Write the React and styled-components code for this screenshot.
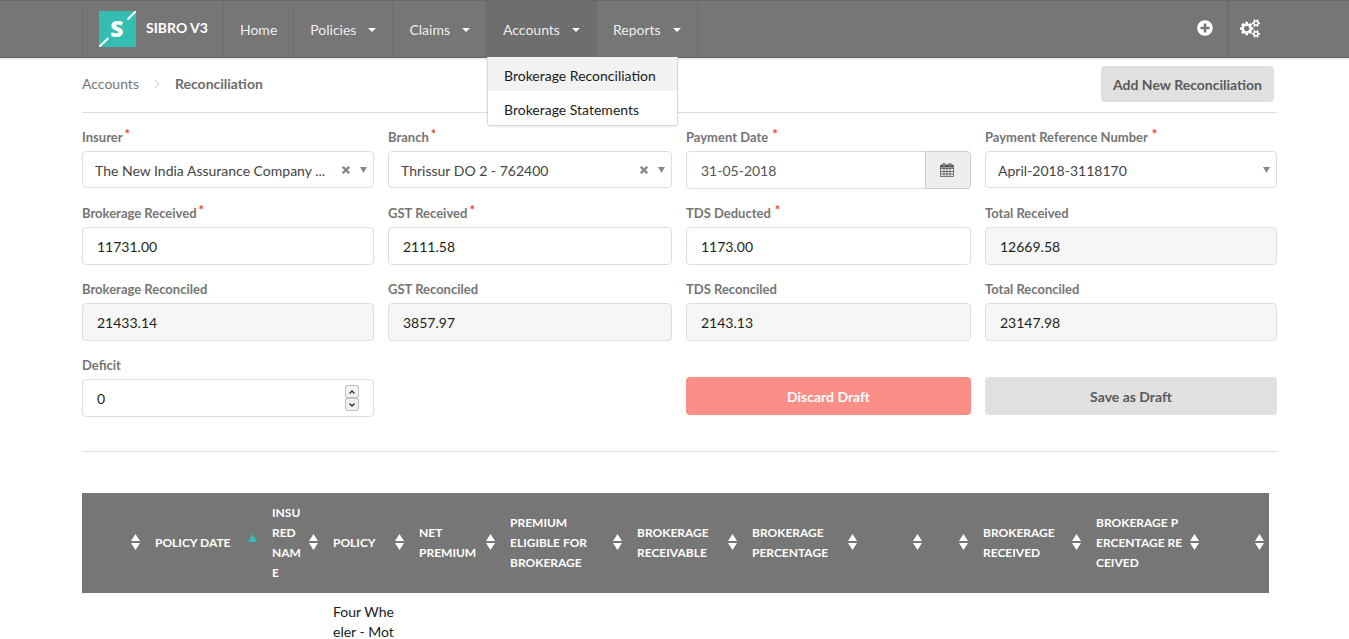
import React from 'react';
import styled, { createGlobalStyle } from 'styled-components';
import { FaPlusCircle } from 'react-icons/fa';

const GlobalStyle = createGlobalStyle`
  * {
    box-sizing: border-box;
  }

  body {
    margin: 0;
    background: #fff;
    color: #212121;
    font-family: Lato, 'Open Sans', sans-serif;
    font-size: 14px;
    line-height: 20px;
  }

  button, input, select {
    font: inherit;
    color: inherit;
    margin: 0;
  }
`;

const NavBar = styled.header`
  display: flex;
  height: 58px;
  padding: 0 72px 0 82px;
  background: #767676;
  border-top: 1px solid #696969;
  border-bottom: 1px solid #656565;
  box-shadow: 0 1px 2px rgba(34, 36, 38, 0.15);
  color: #fff;
`;

const Brand = styled.a`
  display: flex;
  align-items: center;
  gap: 10px;
  padding: 0 15px 0 16px;
  border-left: 1px solid #6e6e6e;
  border-right: 1px solid #6e6e6e;
  color: #fff;
  font-weight: 700;
  text-decoration: none;
`;

const BrandName = styled.span`
  padding-bottom: 2px;
`;

const NavList = styled.nav`
  display: flex;
  flex: 1;
`;

const NavItem = styled.div`
  position: relative;
  display: flex;
  background: ${({ $active }) => ($active ? '#6e6e6e' : 'transparent')};
  border-right: 1px solid #6e6e6e;
`;

const NavLink = styled.a`
  display: flex;
  align-items: center;
  gap: 12px;
  padding: 2px 16px 0;
  color: rgba(255, 255, 255, 0.9);
  text-decoration: none;
`;

const Caret = styled.span`
  border: 4px solid transparent;
  border-top-color: #fff;
  border-bottom: 0;
`;

const Menu = styled.div`
  position: absolute;
  top: 100%;
  left: 0;
  z-index: 2;
  min-width: 191px;
  background: #fff;
  border: 1px solid #d8d8d9;
  border-top: 0;
  border-radius: 0 0 4px 4px;
  box-shadow: 0 1px 3px rgba(34, 36, 38, 0.08);
  overflow: hidden;
`;

const MenuLink = styled.a`
  display: block;
  padding: 9px 16px 5px;
  background: ${({ $selected }) => ($selected ? '#f2f2f2' : '#fff')};
  color: #1b1b1c;
  white-space: nowrap;
  text-decoration: none;
`;

const NavAction = styled.button`
  display: flex;
  align-items: center;
  justify-content: center;
  width: ${({ $divided }) => ($divided ? '50px' : '44px')};
  padding: 0 ${({ $divided }) => ($divided ? '6px' : '0')} 2px 0;
  background: none;
  border: 0;
  border-left: ${({ $divided }) => ($divided ? '2px solid #6e6e6e' : '0')};
  color: #fff;
`;

const Page = styled.main`
  padding: 8px 72px 0 82px;
`;

const TitleRow = styled.div`
  display: flex;
  align-items: flex-start;
  justify-content: space-between;
  padding: 0 3px 10px 0;
  border-bottom: 1px solid #dedede;
`;

const Breadcrumb = styled.nav`
  display: flex;
  align-items: center;
  gap: 15px;
  padding-top: 8px;
  color: #6b6b6b;

  a {
    color: #767676;
    text-decoration: none;
  }
`;

const Button = styled.button`
  height: ${({ $tall }) => ($tall ? '38px' : '36px')};
  padding: 2px 12px 0;
  border: 0;
  border-radius: 4px;
  background: ${({ $danger }) => ($danger ? '#fb8e86' : '#e0e0e1')};
  color: ${({ $danger }) => ($danger ? '#fff' : '#5a5a5a')};
  font-weight: 700;
`;

const Form = styled.form`
  display: grid;
  grid-template-columns: 292fr 284fr 285fr 292fr;
  gap: 14px;
  padding: 14px 0 34px;
  border-bottom: 1px solid #dedede;
`;

const Field = styled.div`
  display: flex;
  flex-direction: column;
  gap: 4px;
  height: 62px;
  min-width: 0;
`;

const Label = styled.label`
  color: #757575;
  font-size: 13px;
  font-weight: 700;
`;

const Star = styled.span`
  color: #e8403a;
  line-height: 0;
  vertical-align: 3px;
  margin-left: ${({ $spaced }) => ($spaced ? '4px' : '2px')};
`;

const Input = styled.input`
  width: 100%;
  height: 38px;
  padding: 0 14px;
  border: 1px solid #dededf;
  border-radius: 4px;
  outline: 0;
  background: ${({ readOnly }) => (readOnly ? '#f6f6f6' : '#fff')};
  color: #1f1f20;
  appearance: textfield;

  &::-webkit-inner-spin-button {
    appearance: none;
  }
`;

const Control = styled.div`
  position: relative;
  display: flex;
`;

const Select = styled.select`
  width: 100%;
  height: 37px;
  padding: 2px 44px 0 12px;
  appearance: none;
  background: #fff;
  border: 1px solid #dededf;
  border-radius: 4px;
  color: #444;
`;

const SelectIcons = styled.span`
  position: absolute;
  top: 0;
  bottom: 0;
  right: 7px;
  display: flex;
  align-items: center;
  gap: 10px;
  pointer-events: none;
`;

const ClearButton = styled.button`
  display: flex;
  padding: 0;
  border: 0;
  background: none;
`;

const DateInput = styled(Input)`
  border-right: 0;
  border-radius: 4px 0 0 4px;
  color: #555;
`;

const DateButton = styled.button`
  display: flex;
  flex: none;
  align-items: center;
  justify-content: center;
  width: 46px;
  padding: 0 2px 2px 0;
  background: #eee;
  border: 1px solid #ccc;
  border-radius: 0 4px 4px 0;
`;

const Spinner = styled.span`
  position: absolute;
  right: 15px;
  top: 6px;
  display: flex;
  flex-direction: column;
`;

const SpinButton = styled.button`
  display: flex;
  align-items: center;
  justify-content: center;
  width: 14px;
  height: 13px;
  padding: 0;
  background: #f0f0f0;
  border: 1px solid #c2c2c0;
  border-radius: 2px;
`;

const FormAction = styled.div`
  display: flex;
  flex-direction: column;
  grid-column: ${({ $column }) => $column};
  padding-top: 22px;
`;

const TableWrap = styled.div`
  padding: 41px 8px 0 0;
`;

const Table = styled.table`
  width: 100%;
  table-layout: fixed;
  border-collapse: collapse;
`;

const Col = styled.col`
  width: ${({ $width }) => $width}px;
`;

const HeadCell = styled.th`
  height: 100px;
  padding: 0 5px 0 10px;
  background: #767676;
  color: #fff;
`;

const SortButton = styled.button`
  display: flex;
  align-items: center;
  justify-content: space-between;
  width: 100%;
  padding: 0;
  background: none;
  border: 0;
  font-size: 12px;
  font-weight: 700;
  text-align: left;
  white-space: pre;
`;

const SortIcon = styled.svg`
  flex: none;
  margin: 0 0 2px auto;
`;

const Cell = styled.td`
  padding: 9px 10px;
  vertical-align: top;
  white-space: pre;
`;

const menus = [
  { label: 'Home' },
  { label: 'Policies', menu: true },
  { label: 'Claims', menu: true },
  { label: 'Accounts', menu: true, active: true },
  { label: 'Reports', menu: true },
];

const amounts = [
  { id: 'brokerage-received', label: 'Brokerage Received', value: '11731.00', required: true },
  { id: 'gst-received', label: 'GST Received', value: '2111.58', required: true },
  { id: 'tds-deducted', label: 'TDS Deducted', value: '1173.00', required: true, spaced: true },
  { id: 'total-received', label: 'Total Received', value: '12669.58', readOnly: true },
  { id: 'brokerage-reconciled', label: 'Brokerage Reconciled', value: '21433.14', readOnly: true },
  { id: 'gst-reconciled', label: 'GST Reconciled', value: '3857.97', readOnly: true },
  { id: 'tds-reconciled', label: 'TDS Reconciled', value: '2143.13', readOnly: true },
  { id: 'total-reconciled', label: 'Total Reconciled', value: '23147.98', readOnly: true },
];

const columns = [
  { label: '', width: 63 },
  { label: 'POLICY DATE', width: 117, sorted: true },
  { label: 'INSU\nRED\nNAM\nE', width: 61 },
  { label: 'POLICY', width: 86, cell: 'Four Whe\neler - Mot' },
  { label: 'NET\nPREMIUM', width: 91 },
  { label: 'PREMIUM\nELIGIBLE FOR\nBROKERAGE', width: 127 },
  { label: 'BROKERAGE\nRECEIVABLE', width: 115 },
  { label: 'BROKERAGE\nPERCENTAGE', width: 120 },
  { label: '', width: 65 },
  { label: '', width: 46 },
  { label: 'BROKERAGE\nRECEIVED', width: 113 },
  { label: 'BROKERAGE P\nERCENTAGE RE\nCEIVED', width: 118 },
  { label: '', width: 65 },
];

const Logo = () => (
  <svg width="37" height="36" viewBox="0 0 37 36" aria-hidden="true">
    <rect width="37" height="36" fill="#35bdb2" />
    <path d="M28.5 8.5L37 0M0 36L9.500 27" stroke="#fff" strokeWidth="2" />
    <text x="18" y="26" fill="#fff" fontFamily="Open Sans, sans-serif" fontSize="23" fontWeight="800" textAnchor="middle">
      S
    </text>
  </svg>
);

// Font Awesome 4 "cogs"
const CogsIcon = () => (
  <svg width="20" height="19" viewBox="0 0 1920 1792" fill="currentColor" aria-hidden="true">
    <path d="M896 896q0-106-75-181t-181-75-181 75-75 181 75 181 181 75 181-75 75-181zm768 512q0-52-38-90t-90-38-90 38-38 90q0 53 37.500 90.500t90.500 37.500 90.500-37.500 37.500-90.500zm0-1024q0-52-38-90t-90-38-90 38-38 90q0 53 37.500 90.500t90.500 37.500 90.500-37.500 37.500-90.500zm-384 421v185q0 10-7 19.500t-16 10.500l-155 24q-11 35-32 76 34 48 90 115 7 11 7 20 0 12-7 19-23 30-82.500 89.500t-78.500 59.500q-11 0-21-7l-115-90q-37 19-77 31-11 108-23 155-7 24-30 24h-186q-11 0-20-7.500t-10-17.500l-23-153q-34-10-75-31l-118 89q-7 7-20 7-11 0-21-8-144-133-144-160 0-9 7-19 10-14 41-53t47-61q-23-44-35-82l-152-24q-10-1-17-9.500t-7-19.500v-185q0-10 7-19.500t16-10.500l155-24q11-35 32-76-34-48-90-115-7-11-7-20 0-12 7-20 22-30 82-89t79-59q11 0 21 7l115 90q34-18 77-32 11-108 23-154 7-24 30-24h186q11 0 20 7.500t10 17.500l23 153q34 10 75 31l118-89q8-7 20-7 11 0 21 8 144 133 144 160 0 8-7 19-12 16-42 54t-45 60q23 48 34 82l152 23q10 2 17 10.500t7 19.500zm640 533v140q0 16-149 31-12 27-30 52 51 113 51 138 0 4-4 7-122 71-124 71-8 0-46-47t-52-68q-20 2-30 2t-30-2q-14 21-52 68t-46 47q-2 0-124-71-4-3-4-7 0-25 51-138-18-25-30-52-149-15-149-31v-140q0-16 149-31 13-29 30-52-51-113-51-138 0-4 4-7 4-2 35-20t59-34 30-16q8 0 46 46.500t52 67.500q20-2 30-2t30 2q51-71 92-112l6-2q4 0 124 70 4 3 4 7 0 25-51 138 17 23 30 52 149 15 149 31zm0-1024v140q0 16-149 31-12 27-30 52 51 113 51 138 0 4-4 7-122 71-124 71-8 0-46-47t-52-68q-20 2-30 2t-30-2q-14 21-52 68t-46 47q-2 0-124-71-4-3-4-7 0-25 51-138-18-25-30-52-149-15-149-31v-140q0-16 149-31 13-29 30-52-51-113-51-138 0-4 4-7 4-2 35-20t59-34 30-16q8 0 46 46.500t52 67.500q20-2 30-2t30 2q51-71 92-112l6-2q4 0 124 70 4 3 4 7 0 25-51 138 17 23 30 52 149 15 149 31z" />
  </svg>
);

const CalendarIcon = () => (
  <svg width="14" height="15" viewBox="0 0 14 15" fill="none" stroke="#555" aria-hidden="true">
    <path d="M.5 3.500h13v11H.5zM.5 6.500h13M.5 9.500h13M.5 12h13M4 6v8M7 6v8M10 6v8" strokeWidth=".8" />
    <path d="M1 3h12v2H1z" fill="#555" />
    <path d="M4 1v3M10 1v3" strokeWidth="2.500" />
    <path d="M4 1v3M10 1v3" stroke="#eee" strokeWidth=".7" />
  </svg>
);

const SelectField = ({ id, label, value, clearable, spaced }) => (
  <Field>
    <Label htmlFor={id}>
      {label}
      <Star $spaced={spaced}>*</Star>
    </Label>
    <Control>
      <Select id={id} defaultValue={value}>
        <option>{value}</option>
      </Select>
      <SelectIcons>
        {clearable && (
          <ClearButton type="button" aria-label={`Clear ${label}`}>
            <svg width="8" height="8" viewBox="0 0 8 8" stroke="#888" strokeWidth="2.400">
              <path d="M.8.8l6.400 6.400M7.200.8L.8 7.200" />
            </svg>
          </ClearButton>
        )}
        <svg width="7" height="6" viewBox="0 0 7 6" fill="#888">
          <path d="M0 0h7L3.500 6z" />
        </svg>
      </SelectIcons>
    </Control>
  </Field>
);

const Navigation = () => (
  <NavBar>
    <Brand href="#">
      <Logo />
      <BrandName>SIBRO V3</BrandName>
    </Brand>
    <NavList>
      {menus.map(({ label, menu, active }) => (
        <NavItem key={label} $active={active}>
          <NavLink href="#">
            {label}
            {menu && <Caret />}
          </NavLink>
          {active && (
            <Menu>
              <MenuLink href="#" $selected>Brokerage Reconciliation</MenuLink>
              <MenuLink href="#">Brokerage Statements</MenuLink>
            </Menu>
          )}
        </NavItem>
      ))}
    </NavList>
    <NavAction aria-label="Add">
      <FaPlusCircle size={16} />
    </NavAction>
    <NavAction aria-label="Settings" $divided>
      <CogsIcon />
    </NavAction>
  </NavBar>
);

const ReconciliationForm = () => (
  <Form>
    <SelectField id="insurer" label="Insurer" value="The New India Assurance Company ..." clearable />
    <SelectField id="branch" label="Branch" value="Thrissur DO 2 - 762400" clearable />
    <Field>
      <Label htmlFor="payment-date">
        Payment Date
        <Star $spaced>*</Star>
      </Label>
      <Control>
        <DateInput id="payment-date" defaultValue="31-05-2018" />
        <DateButton type="button" aria-label="Open calendar">
          <CalendarIcon />
        </DateButton>
      </Control>
    </Field>
    <SelectField id="reference" label="Payment Reference Number" value="April-2018-3118170" spaced />

    {amounts.map(({ id, label, value, required, spaced, readOnly }) => (
      <Field key={id}>
        <Label htmlFor={id}>
          {label}
          {required && <Star $spaced={spaced}>*</Star>}
        </Label>
        <Input id={id} defaultValue={value} readOnly={readOnly} />
      </Field>
    ))}

    <Field>
      <Label htmlFor="deficit">Deficit</Label>
      <Control>
        <Input id="deficit" type="number" defaultValue="0" />
        <Spinner>
          <SpinButton type="button" aria-label="Increase">
            <svg width="6" height="4" viewBox="0 0 6 4" fill="none" stroke="#333" strokeWidth="1.400">
              <path d="M.5 3.500L3 1l2.500 2.500" />
            </svg>
          </SpinButton>
          <SpinButton type="button" aria-label="Decrease">
            <svg width="6" height="4" viewBox="0 0 6 4" fill="none" stroke="#333" strokeWidth="1.400">
              <path d="M.5.5L3 3 5.500.5" />
            </svg>
          </SpinButton>
        </Spinner>
      </Control>
    </Field>
    <FormAction $column={3}>
      <Button type="button" $tall $danger>Discard Draft</Button>
    </FormAction>
    <FormAction $column={4}>
      <Button type="button" $tall>Save as Draft</Button>
    </FormAction>
  </Form>
);

const PolicyTable = () => (
  <TableWrap>
    <Table>
      <colgroup>
        {columns.map(({ width }, i) => (
          <Col key={i} $width={width} />
        ))}
      </colgroup>
      <thead>
        <tr>
          {columns.map(({ label, sorted }, i) => (
            <HeadCell key={i} scope="col" aria-sort={sorted ? 'ascending' : 'none'}>
              <SortButton type="button">
                {label}
                <SortIcon width="9" height="16" viewBox="0 0 9 16" fill={sorted ? '#35bdb2' : '#fff'}>
                  {sorted ? <path d="M0 8L4.500 0 9 8z" /> : <path d="M0 7L4.500 0 9 7zM0 9h9l-4.500 7z" />}
                </SortIcon>
              </SortButton>
            </HeadCell>
          ))}
        </tr>
      </thead>
      <tbody>
        <tr>
          {columns.map(({ cell }, i) => (
            <Cell key={i}>{cell}</Cell>
          ))}
        </tr>
      </tbody>
    </Table>
  </TableWrap>
);

const App = () => (
  <>
    <GlobalStyle />
    <Navigation />
    <Page>
      <TitleRow>
        <Breadcrumb aria-label="Breadcrumb">
          <a href="#">Accounts</a>
          <svg width="6" height="10" viewBox="0 0 6 10" fill="none" stroke="#ccc" aria-hidden="true">
            <path d="M1 1l4 4-4 4" />
          </svg>
          <strong>Reconciliation</strong>
        </Breadcrumb>
        <Button type="button">Add New Reconciliation</Button>
      </TitleRow>
      <ReconciliationForm />
      <PolicyTable />
    </Page>
  </>
);

export default App;
